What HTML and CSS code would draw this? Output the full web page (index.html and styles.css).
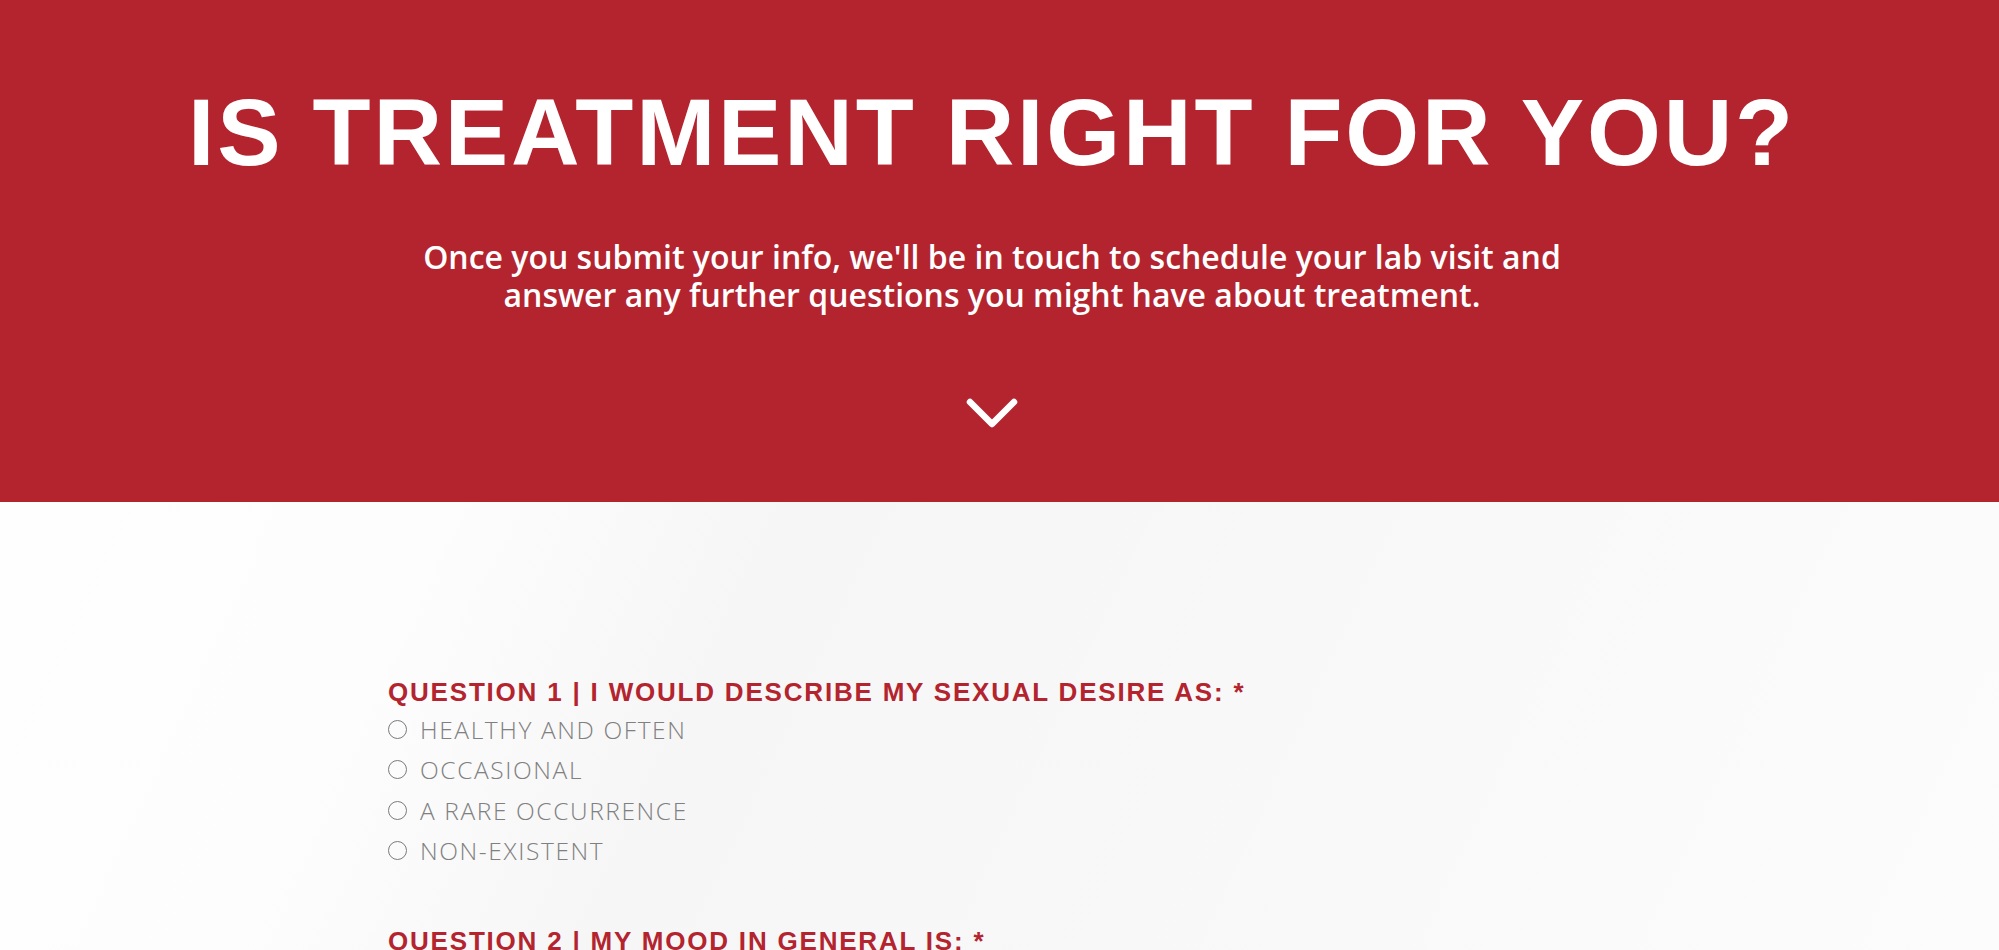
FILE: index.html
```html
<!DOCTYPE html>
<html lang="en">
<head>
<meta charset="utf-8">
<title>Is Treatment Right For You?</title>
<link rel="stylesheet" href="styles.css">
</head>
<body>
<header class="hero">
  <h1 class="hero-title">IS TREATMENT RIGHT FOR YOU?</h1>
  <p class="hero-sub">Once you submit your info, we'll be in touch to schedule your lab visit and<br>answer any further questions you might have about treatment.</p>
  <div class="hero-arrow">
    <svg width="52" height="32" viewBox="0 0 52 32"><path d="M4 4 L26 26 L48 4" fill="none" stroke="#fff" stroke-width="6.5" stroke-linecap="round" stroke-linejoin="round"/></svg>
  </div>
</header>
<main class="form-area">
  <form class="quiz">
    <fieldset class="question">
      <legend class="q-title">QUESTION 1 | I WOULD DESCRIBE MY SEXUAL DESIRE AS: *</legend>
      <label class="opt"><span class="radio"></span>HEALTHY AND OFTEN</label>
      <label class="opt"><span class="radio"></span>OCCASIONAL</label>
      <label class="opt"><span class="radio"></span>A RARE OCCURRENCE</label>
      <label class="opt"><span class="radio"></span>NON-EXISTENT</label>
    </fieldset>
    <fieldset class="question">
      <legend class="q-title">QUESTION 2 | MY MOOD IN GENERAL IS: *</legend>
      <label class="opt"><span class="radio"></span>GOOD</label>
      <label class="opt"><span class="radio"></span>OKAY</label>
    </fieldset>
  </form>
</main>
</body>
</html>
```
FILE: styles.css
```css
html, body {
  margin: 0;
  padding: 0;
}
body {
  font-family: "Liberation Sans", Arial, sans-serif;
  background: #f8f8f8;
  overflow: hidden;
  height: 950px;
}
.hero {
  background: #b3242f;
  color: #fff;
  height: 502px;
  box-sizing: border-box;
  padding: 82px 15px 0 0;
  text-align: center;
}
.hero-title {
  margin: 0;
  font-size: 95px;
  line-height: 100px;
  font-weight: 700;
  letter-spacing: 2.8px;
}
.hero-sub {
  margin: 56px 0 0;
  font-family: "Open Sans", sans-serif;
  font-size: 32px;
  line-height: 38px;
  font-weight: 600;
}
.hero-arrow {
  margin-top: 84px;
  display: flex;
  justify-content: center;
}
.form-area {
  height: 448px;
  background:
    linear-gradient(115deg, #fefefe 0%, #fdfdfd 20%, #f6f6f6 36%, #f8f8f8 60%, #fafafa 80%, #fcfcfc 100%);
}
.quiz {
  width: 1208px;
  margin: 0 auto 0 388px;
  padding-top: 175px;
}
.question {
  border: 0;
  margin: 0 0 55px;
  padding: 0;
  display: flex;
  flex-direction: column;
}
.q-title {
  padding: 0;
  color: #b3242f;
  font-size: 26px;
  line-height: 30px;
  font-weight: 700;
  letter-spacing: 1.8px;
  margin-bottom: 2px;
}
.opt {
  display: flex;
  align-items: center;
  gap: 13px;
  height: 40.5px;
  font-family: "Open Sans", sans-serif;
  font-size: 24.5px;
  font-weight: 300;
  letter-spacing: 1.6px;
  color: #808080;
}
.radio {
  width: 17px;
  height: 17px;
  border: 1.6px solid #7a7a7a;
  border-radius: 50%;
  flex: none;
}
```
